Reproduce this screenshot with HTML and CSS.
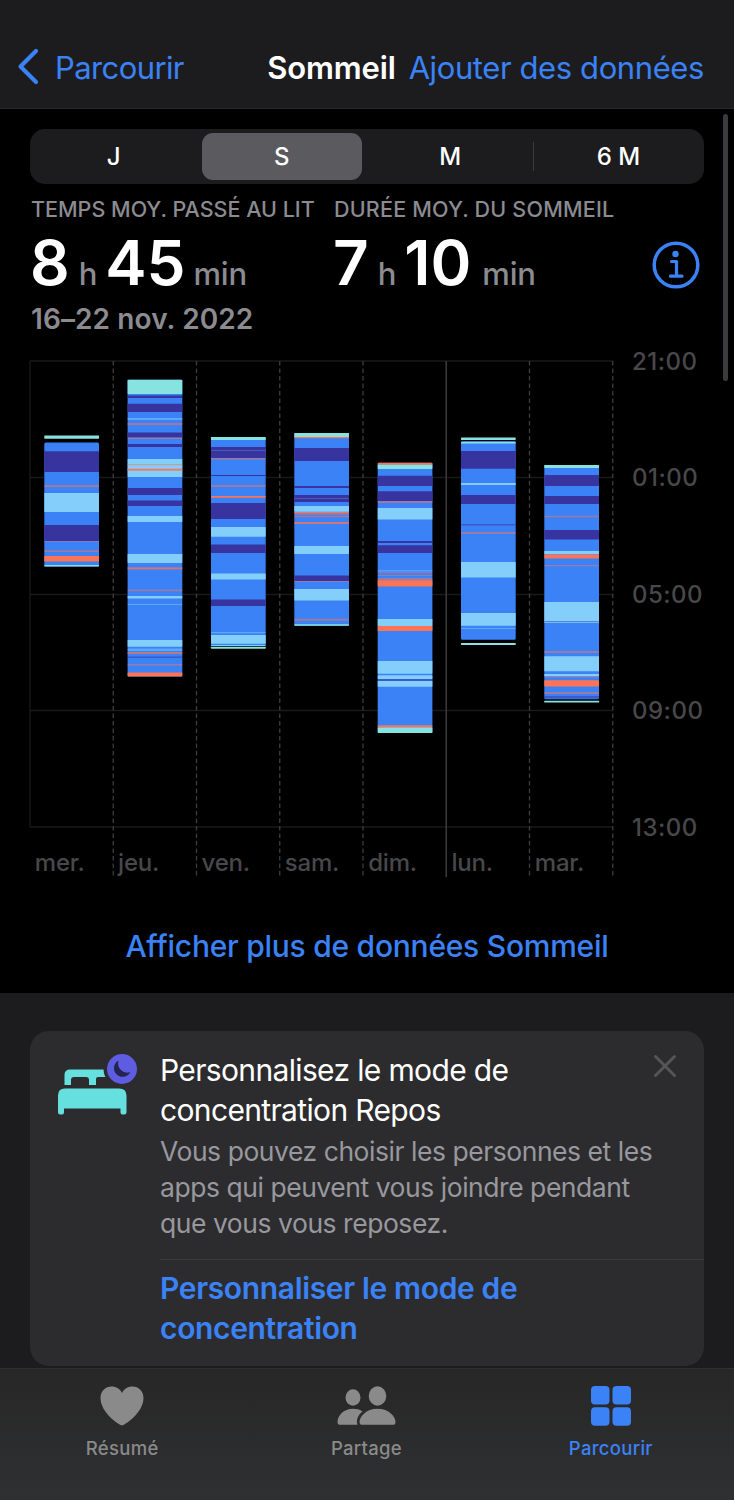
FILE: index.html
```html
<!DOCTYPE html>
<html lang="fr">
<head>
    <meta charset="UTF-8">
    <meta name="viewport" content="width=device-width, initial-scale=1.0">
    <title>Sommeil</title>

    <link rel="stylesheet" href="styles.css">
</head>
<body>
    <header class="navbar">
        <a class="back">
            <svg width="22" height="38" viewBox="0 0 22 38"><path d="M19 3 L3.5 18.5 L19 34" fill="none" stroke="currentColor" stroke-width="4.2" stroke-linecap="round" stroke-linejoin="round"/></svg>
            <span>Parcourir</span>
        </a>
        <h1 class="title">Sommeil</h1>
        <a class="add">Ajouter des données</a>
    </header>

    <main class="sleep">
        <div class="scrollbar"></div>

        <div class="segments">
            <span class="segment">J</span>
            <span class="segment selected">S</span>
            <span class="segment divided">M</span>
            <span class="segment">6 M</span>
        </div>

        <section class="summary">
            <div class="stat">
                <h2 class="stat-label">TEMPS MOY. PASSÉ AU LIT</h2>
                <p class="stat-value"><b>8</b><span class="unit-h">h</span><b>45</b><span class="unit-min">min</span></p>
            </div>
            <div class="stat stat-sleep">
                <h2 class="stat-label">DURÉE MOY. DU SOMMEIL</h2>
                <p class="stat-value"><b>7</b><span class="unit-h">h</span><b>10</b><span class="unit-min">min</span></p>
            </div>
            <svg class="info" width="48" height="48" viewBox="0 0 48 48">
                <circle cx="24" cy="24" r="21.8" fill="none" stroke="currentColor" stroke-width="3.5"/>
                <circle cx="23.5" cy="13" r="3.2" fill="currentColor"/>
                <path d="M19.5 20.5 H24.5 V35 M18.5 35.2 H30" fill="none" stroke="currentColor" stroke-width="3.2" stroke-linecap="round" stroke-linejoin="round"/>
            </svg>
        </section>
        <p class="range">16–22 nov. 2022</p>

        <svg class="chart" id="chart" width="734" height="550" viewBox="0 340 734 550"></svg>

        <a class="more">Afficher plus de données Sommeil</a>
    </main>

    <section class="suggestions">
        <article class="card">
            <svg class="bed" width="82" height="64" viewBox="0 0 82 64">
                <path d="M7.5 33 V23 Q7.5 17.5 13 17.5 H52 V25 H41 Q39 25 39 27 V33 H32 V28 Q32 25 29 25 H17 Q14 25 14 28 V33 Z" fill="#66dfdf"/>
                <path d="M1 60 V43.5 Q1 36.5 8 36.5 H62 Q69.5 36.5 69.5 43.5 V60 Q69.5 62.5 67 62.5 H65.5 Q63.5 62.5 63.5 60.5 V56.5 H7 V60.5 Q7 62.5 5 62.5 H3.5 Q1 62.5 1 60 Z" fill="#66dfdf"/>
                <circle cx="65" cy="17" r="18.5" fill="#2c2c2e"/>
                <circle cx="65" cy="17" r="15" fill="#5e5ce0"/>
                <path d="M61.5 8.5 A8.7 8.7 0 1 0 73.3 20.3 A9.5 9.5 0 0 1 61.5 8.5 Z" fill="#252450"/>
            </svg>
            <div class="card-text">
                <div class="card-head">
                    <h3 class="card-title">Personnalisez le mode de concentration Repos</h3>
                    <svg class="close" width="24" height="24" viewBox="0 0 24 24"><path d="M2.5 2.5 L21.5 21.5 M21.5 2.5 L2.5 21.5" stroke="currentColor" stroke-width="3" stroke-linecap="round"/></svg>
                </div>
                <p class="card-body">Vous pouvez choisir les personnes et les apps qui peuvent vous joindre pendant que vous vous reposez.</p>
                <a class="card-link">Personnaliser le mode de concentration</a>
            </div>
        </article>
    </section>

    <nav class="tabbar">
        <a class="tab">
            <svg width="44" height="40" viewBox="0 0 44 40"><path d="M22 39.5 C20 39.5 0.5 27 0.5 12 C0.5 5 5.5 0.5 11.5 0.5 C16.5 0.5 20 3 22 7 C24 3 27.5 0.5 32.5 0.5 C38.5 0.5 43.5 5 43.5 12 C43.5 27 24 39.5 22 39.5 Z" fill="currentColor"/></svg>
            <span>Résumé</span>
        </a>
        <a class="tab">
            <svg width="60" height="40" viewBox="0 0 60 40" fill="currentColor">
                <ellipse cx="17" cy="11.5" rx="7.5" ry="8.3"/>
                <ellipse cx="41.5" cy="10" rx="8.8" ry="9.7"/>
                <path d="M26.5 25.5 C24 23.5 20.8 22.8 17 22.8 C7.5 22.8 1.5 30 1.5 36 C1.5 38 2.5 38.8 4.5 38.8 H21.5 C19.8 33.5 22.5 28.5 26.5 25.5 Z"/>
                <path d="M41.5 22.8 C30 22.8 23.5 31 23.5 36 C23.5 38 24.5 38.8 26.5 38.8 H56.5 C58.5 38.8 59.5 38 59.5 36 C59.5 31 53 22.8 41.5 22.8 Z"/>
            </svg>
            <span>Partage</span>
        </a>
        <a class="tab active">
            <svg width="40" height="40" viewBox="0 0 40 40" fill="currentColor">
                <rect x="0" y="0" width="18.5" height="18.5" rx="4"/>
                <rect x="21.5" y="0" width="18.5" height="18.5" rx="4"/>
                <rect x="0" y="21.3" width="18.5" height="18.5" rx="4"/>
                <rect x="21.5" y="21.3" width="18.5" height="18.5" rx="4"/>
            </svg>
            <span>Parcourir</span>
        </a>
    </nav>

    <script src="chart.js"></script>
</body>
</html>
```

FILE: styles.css
```css
body {
    margin: 0;
    width: 734px;
    height: 1500px;
    overflow: hidden;
    background: #1c1c1e;
    color: #fff;
    font-family: Inter, "Liberation Sans", sans-serif;
    font-size: 31px;
}

h1, h2, h3, p {
    margin: 0;
    font-weight: 400;
}

svg {
    display: block;
    flex: none;
}

.navbar {
    box-sizing: border-box;
    display: flex;
    align-items: center;
    height: 109px;
    padding: 26px 30px 0 17px;
    border-bottom: 1px solid #28282a;
    white-space: nowrap;
}

.back {
    display: flex;
    align-items: center;
    gap: 16px;
    width: 251px;
    color: #3b82f6;
    letter-spacing: -0.6px;
}

.title {
    width: 142px;
    font-size: 31px;
    font-weight: 600;
    letter-spacing: -0.1px;
}

.add {
    color: #3b82f6;
    letter-spacing: -0.4px;
}

.sleep {
    position: relative;
    box-sizing: border-box;
    height: 884px;
    padding-top: 20px;
    background: #000;
}

.scrollbar {
    position: absolute;
    top: 5px;
    right: 6px;
    width: 5px;
    height: 267px;
    border-radius: 3px;
    background: #3a3a3c;
}

.segments {
    box-sizing: border-box;
    display: grid;
    grid-template-columns: repeat(4, 1fr);
    gap: 9px;
    height: 55px;
    margin: 0 30px;
    padding: 4px 6px 4px 4px;
    border-radius: 15px;
    background: #1c1c1e;
    font-size: 24px;
    font-weight: 500;
}

.segment {
    display: flex;
    align-items: center;
    justify-content: center;
    border-radius: 11px;
}

.segment.selected {
    background: #5b5a5f;
}

.segment.divided {
    margin: 0 -4px;
    border-radius: 0;
    background: linear-gradient(#3a3a3c, #3a3a3c) right center / 1px 29px no-repeat;
}

.summary {
    display: flex;
    height: 106px;
    padding: 12px 34px 0 31px;
}

.stat {
    width: 303px;
    white-space: nowrap;
}

.stat-label {
    color: #8b8b90;
    font-size: 21.5px;
    font-weight: 500;
    line-height: 27px;
    letter-spacing: 0;
}

.stat-sleep .stat-label {
    letter-spacing: 0.2px;
}

.stat-value {
    display: flex;
    align-items: baseline;
    height: 79px;
    margin-left: -1px;
    color: #8b8b90;
    font-size: 31px;
    font-weight: 500;
    line-height: 79px;
    letter-spacing: -0.2px;
}

.stat-value b {
    color: #fff;
    font-size: 62px;
    font-weight: 600;
    letter-spacing: 0;
}

.unit-h {
    margin: 0 8px 0 9px;
}

.unit-min {
    margin-left: 8px;
}

.stat-sleep .unit-min {
    margin-left: 11px;
}

.info {
    margin: 45px 0 0 15px;
    color: #3b82f6;
}

.range {
    height: 36px;
    margin: -1px 0 0 31px;
    color: #8b8b90;
    font-size: 28px;
    font-weight: 600;
    line-height: 36px;
    letter-spacing: 0.1px;
}

.chart {
    margin-top: 3px;
}

.grid-line {
    stroke: #19191a;
    stroke-width: 1.3;
}

.day-line {
    stroke: #3d3d3f;
    stroke-width: 1.3;
    stroke-dasharray: 4.5 3;
}

.week-line {
    stroke: #39393b;
    stroke-width: 1.6;
}

.hour, .day {
    fill: #48484a;
    font-size: 24px;
    font-weight: 500;
    letter-spacing: 0.5px;
}

.day {
    letter-spacing: -0.2px;
}

.core { fill: #3b82f6; }
.deep { fill: #37349f; }
.rem { fill: #83cefa; }
.awake { fill: #fc7455; }
.bed-time { fill: #86e3df; }
.brief { opacity: 0.5; }

.more {
    display: block;
    margin-top: 36px;
    color: #3b82f6;
    font-size: 30px;
    font-weight: 500;
    line-height: 40px;
    letter-spacing: -0.25px;
    text-align: center;
}

.suggestions {
    box-sizing: border-box;
    height: 375px;
    padding: 38px 30px 0;
}

.card {
    box-sizing: border-box;
    display: flex;
    height: 335px;
    padding: 20px 0 0 27px;
    border-radius: 19px;
    background: #2c2c2e;
}

.bed {
    margin: 1px 21px 0 0;
}

.card-text {
    flex: 1;
}

.card-head {
    display: flex;
    justify-content: space-between;
    padding-right: 27px;
}

.card-title {
    width: 400px;
    font-size: 30px;
    line-height: 39.5px;
    letter-spacing: -0.65px;
}

.close {
    margin-top: 3px;
    color: #555557;
}

.card-body {
    width: 510px;
    margin-top: 3px;
    padding-bottom: 18px;
    color: #98989e;
    font-size: 26.5px;
    line-height: 36px;
    letter-spacing: -0.46px;
}

.card-link {
    display: block;
    padding: 9px 140px 0 0;
    border-top: 1px solid #3a3a3c;
    color: #3b82f6;
    font-size: 30px;
    font-weight: 600;
    line-height: 39.5px;
    letter-spacing: -0.35px;
}

.tabbar {
    box-sizing: border-box;
    display: flex;
    height: 132px;
    padding: 17px 1px 0 0;
    border-top: 1px solid #2f2f30;
    background: linear-gradient(#272727, #2f3032);
}

.tab {
    display: flex;
    flex: 1;
    flex-direction: column;
    align-items: center;
    gap: 10px;
    color: #8a8a8a;
    font-size: 18.5px;
    font-weight: 500;
    line-height: 24px;
    letter-spacing: 0.3px;
}

.tab.active {
    color: #3b82f6;
}
```

FILE: chart.js
```js
const chart = document.getElementById('chart');

const hours = [[361, '21:00'], [477.5, '01:00'], [594.5, '05:00'], [710.5, '09:00'], [827, '13:00']];

const kinds = {
    D: 'deep', R: 'rem', A: 'awake', T: 'bed-time',
    d: 'deep brief', r: 'rem brief', a: 'awake brief'
};

// each night: day name, left edge, start and end of the block, then [stage, from, to]
const nights = [
    ['mer.', 44.3, 442.5, 566.5, [
        ['T', 435.5, 438.7], ['D', 451.3, 472], ['a', 485, 487.2], ['R', 493, 512], ['D', 525, 541],
        ['a', 541, 541.8], ['a', 550.3, 552], ['A', 556, 561.5], ['T', 565, 566.5]
    ]],
    ['jeu.', 127.6, 379.7, 676.5, [
        ['T', 379.7, 394], ['D', 395.5, 398], ['D', 403.7, 412], ['r', 418, 420], ['a', 423, 425.3],
        ['D', 432.5, 437.5], ['a', 437.5, 439], ['D', 444, 447], ['R', 459, 477], ['a', 464, 465.3],
        ['a', 468.5, 471], ['A', 469, 470.3], ['D', 488, 495], ['D', 500.5, 506], ['R', 516, 522],
        ['R', 554, 563], ['a', 567, 569.5], ['a', 568, 569.3], ['a', 589.5, 591.3], ['R', 596, 598.5],
        ['r', 604, 605], ['R', 640, 646.7], ['r', 648.5, 651], ['a', 652, 654], ['a', 652.3, 653.8],
        ['d', 656.5, 658], ['a', 664, 665.5], ['A', 672.5, 676.5]
    ]],
    ['ven.', 211, 437, 646, [
        ['T', 437, 440], ['D', 447, 458], ['r', 450.2, 450.8], ['a', 458, 459.5], ['D', 475, 476],
        ['a', 485, 487], ['A', 496, 497.7], ['D', 503, 519], ['R', 527, 536.7], ['D', 544.5, 553],
        ['R', 573.5, 579.5], ['D', 599.5, 606], ['r', 632, 633.3], ['R', 635, 643.7], ['R', 645, 646],
        ['T', 646.8, 648.7]
    ]],
    ['sam.', 294.3, 433, 625.7, [
        ['T', 433, 437], ['A', 437, 438.3], ['D', 448, 461], ['D', 486, 488], ['D', 495, 502],
        ['r', 498.3, 498.8], ['R', 506, 511.7], ['A', 512, 513.5], ['a', 514.3, 515.3], ['a', 516, 517.2],
        ['A', 522.3, 523.8], ['R', 546, 554], ['D', 575.5, 581], ['a', 581, 582], ['R', 589, 600.5],
        ['a', 618.7, 620.7], ['T', 624.3, 625.7]
    ]],
    ['dim.', 377.7, 462.7, 733, [
        ['A', 462.7, 464.7], ['T', 464.7, 469], ['D', 475.7, 486], ['D', 491.3, 501], ['a', 501, 503],
        ['R', 508, 519.5], ['D', 541, 543], ['D', 545.3, 553], ['r', 570.3, 571.6], ['a', 572.3, 573.3],
        ['a', 575, 576], ['a', 578, 580.3], ['A', 580.3, 586.5], ['R', 619, 626], ['A', 626, 631],
        ['R', 661, 673.7], ['R', 675.2, 679], ['d', 679, 681], ['R', 681, 686.7], ['A', 725.3, 727.5],
        ['T', 727.5, 733]
    ]],
    ['lun.', 461, 441.3, 639.7, [
        ['T', 437.5, 440], ['T', 441.8, 443.5], ['D', 451, 468.7], ['R', 483, 485], ['D', 495, 504],
        ['d', 524, 525.5], ['a', 532, 534], ['R', 562, 577.5], ['R', 613, 625.7], ['r', 628, 629],
        ['T', 643, 645]
    ]],
    ['mar.', 544.3, 465, 699.3, [
        ['T', 465, 468], ['D', 475, 486], ['D', 496, 504], ['a', 515.7, 517.3], ['D', 530, 539.5],
        ['R', 551, 554.3], ['A', 554.5, 558.5], ['a', 565, 566.3], ['R', 602, 622.8], ['D', 621, 621.6],
        ['a', 651, 653], ['R', 656.3, 671.3], ['R', 674, 676.3], ['a', 676.5, 677.5], ['A', 680.3, 686.5],
        ['a', 692, 694], ['d', 696, 698.5], ['T', 700.8, 702.6]
    ]]
];

let svg = '';

for (const [y, label] of hours) {
    svg += `<line class="grid-line" x1="30" y1="${y}" x2="613" y2="${y}"/>`;
    svg += `<text class="hour" x="632" y="${y + 8.7}">${label}</text>`;
}
svg += '<line class="grid-line" x1="30" y1="361" x2="30" y2="827"/>';

nights.forEach(([day, x, start, end, stages], i) => {
    const right = 30 + (i + 1) * 83.25;
    const kind = i === 4 ? 'week-line' : 'day-line';
    const rect = (cls, from, to) =>
        `<rect class="${cls}" x="${x}" y="${from}" width="54.7" height="${(to - from).toFixed(1)}" rx="${cls === 'core' ? 1.5 : 0.4}"/>`;

    svg += `<line class="${kind}" x1="${right}" y1="361" x2="${right}" y2="877"/>`;
    svg += `<text class="day" x="${x - 9.5}" y="871">${day}</text>`;
    svg += rect('core', start, end);
    for (const [stage, from, to] of stages) {
        svg += rect(kinds[stage], from, to);
    }
});

chart.innerHTML = svg;
```
